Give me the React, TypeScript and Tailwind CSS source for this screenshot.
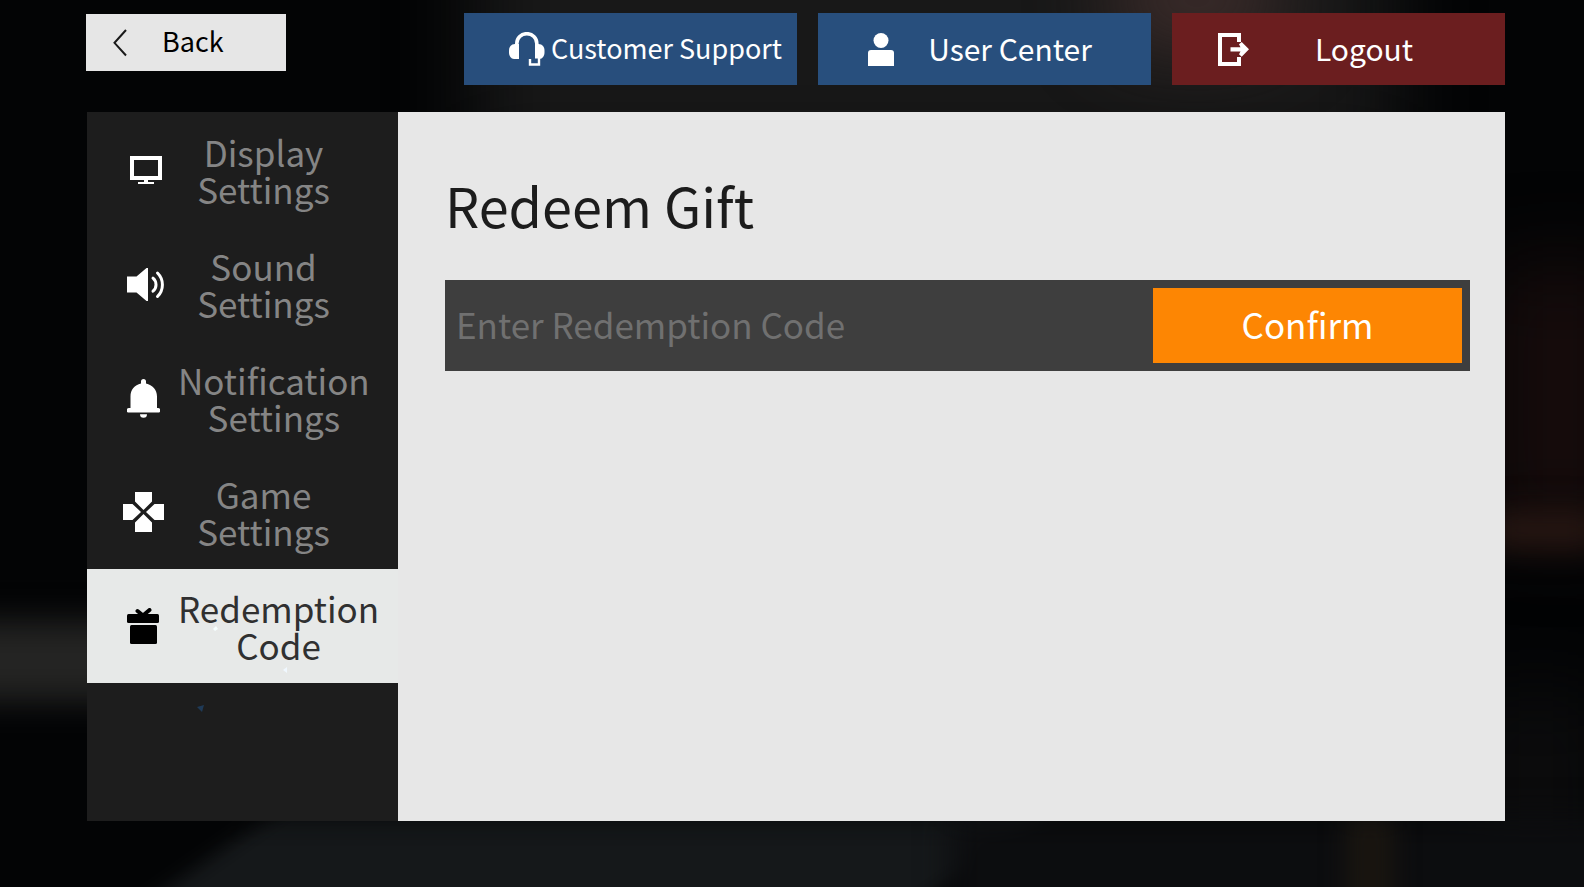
import React, { useState } from 'react';

const BackIcon = () => (
  <svg width="14" height="28" viewBox="0 0 14 28" fill="none" stroke="#1a1a1a" strokeWidth="2">
    <path d="M13 1 1.500 13.800 13 26.500" />
  </svg>
);

const HeadsetIcon = () => (
  <svg width="36" height="34" viewBox="0 0 36 34" fill="#fff">
    <path d="M10 12v15H5C2 27 0 24 0 20.500v-2C0 15 2 12 6 12z" />
    <path d="M26 12h3.500c4 0 6 3 6 6.500v2c0 3.500-2 6.500-5 6.500H29v-.5h-3z" />
    <path d="M7.800 14v-2.500a10 9.800 0 0 1 20 0V14" fill="none" stroke="#fff" strokeWidth="3.600" />
    <path d="M21 27v5.500h9V25" fill="none" stroke="#fff" strokeWidth="2.400" />
  </svg>
);

const UserIcon = () => (
  <svg width="26" height="33" viewBox="0 0 26 33" fill="#fff">
    <circle cx="13" cy="7.500" r="7.500" />
    <path d="M3 17h20a3 3 0 0 1 3 3v13H0V20a3 3 0 0 1 3-3z" />
  </svg>
);

const LogoutIcon = () => (
  <svg width="34" height="33" viewBox="0 0 34 33" fill="#fff">
    <path d="M0 0h23v9h-4V4H4v25h15v-5h4v9H0z" />
    <path d="M12.500 14.300h10l-1.500-3L23.700 9l7.300 7.300-7.300 7.400-2.700-2.400 1.500-2.800h-10z" />
  </svg>
);

const DisplayIcon = () => (
  <svg width="36" height="28" viewBox="-4 0 36 28" fill="#fff">
    <path fillRule="evenodd" d="M0 0h32v24H18v2h6v2H8v-2h6v-2H0zM4 4v16h24V4z" />
  </svg>
);

const SoundIcon = () => (
  <svg width="42" height="33" viewBox="-4 0 42 33" fill="#fff">
    <path d="M0 8.500h9.500L19.500 0H21v33h-1.500l-10-8.500H0z" />
    <path
      d="M26 10.200a8.500 8.500 0 0 1 0 13M30.500 5a16.500 16.500 0 0 1 0 23.500"
      fill="none"
      stroke="#fff"
      strokeWidth="3"
      strokeLinecap="round"
    />
  </svg>
);

const BellIcon = () => (
  <svg width="33" height="39" viewBox="0 0 33 39" fill="#fff">
    <path d="M14 4.500V2.500a2.500 2.500 0 0 1 5 0v2c6.500 1.500 11 6 11 13V29h1a2.300 2.300 0 0 1 0 4.600H2A2.300 2.300 0 0 1 2 29h1.500V17.500c0-7 4-11.500 10.500-13z" />
    <path d="M13 35.200h7a3.500 3.500 0 0 1-7 0z" />
  </svg>
);

const GameIcon = () => (
  <svg width="42" height="40" viewBox="0 0 42 40" fill="#fff">
    <path d="M12 0h17v9.500L20.500 18 12 9.500zM12 40h17v-9.500L20.500 22 12 30.500zM0 12v16h9.500l8.500-8-8.500-8zM41 12v16h-9.500L23 20l8.500-8z" />
  </svg>
);

const GiftIcon = () => (
  <svg width="34" height="36" viewBox="0 0 34 36">
    <path d="M10.500 3 16 7.500 22.500 2" fill="none" stroke="#000" strokeWidth="4" strokeLinecap="round" />
    <rect y="6" width="32" height="9" rx="1.500" />
    <rect x="3" y="17" width="27" height="19" rx="1.500" />
  </svg>
);

interface MenuItem {
  key: string;
  lines: [string, string];
  icon: React.ReactNode;
}

const menu: MenuItem[] = [
  { key: 'display', lines: ['Display', 'Settings'], icon: <DisplayIcon /> },
  { key: 'sound', lines: ['Sound', 'Settings'], icon: <SoundIcon /> },
  { key: 'notification', lines: ['Notification', 'Settings'], icon: <BellIcon /> },
  { key: 'game', lines: ['Game', 'Settings'], icon: <GameIcon /> },
  { key: 'redeem', lines: ['Redemption', 'Code'], icon: <GiftIcon /> },
];

interface ActionButtonProps {
  icon: React.ReactNode;
  label: string;
  color: string;
  textSize: string;
}

const ActionButton: React.FC<ActionButtonProps> = ({ icon, label, color, textSize }) => (
  <button type="button" className={`flex h-[72px] w-[333px] items-center text-white ${color}`}>
    <span className="flex w-[87px] shrink-0 justify-center pl-[38px]">{icon}</span>
    <span className={`min-w-[210px] whitespace-nowrap pb-0.5 text-center ${textSize}`}>{label}</span>
  </button>
);

const Backdrop = () => (
  <div className="absolute inset-0 -z-10 overflow-hidden bg-[#030405]">
    <div className="absolute -top-24 left-[30%] h-64 w-[58%] bg-[#181818] blur-2xl" />
    <div className="absolute -top-10 left-[70%] h-20 w-44 rounded-full bg-[#43302e] blur-2xl" />
    <div className="absolute top-[70%] -left-8 h-20 w-40 bg-[#242423] blur-lg" />
    <div className="absolute top-[30%] -right-10 h-[30%] w-32 bg-[#170c0c] blur-2xl" />
    <div className="absolute top-[58%] -right-4 h-8 w-28 bg-[#2b1914] blur-lg" />
    <div className="absolute top-[78%] -right-4 h-[30%] w-32 bg-[#0c0c0d] blur-2xl" />
    <div className="absolute top-[92%] left-[12%] h-28 w-[49%] -skew-x-[55deg] bg-[#15181a] blur-lg" />
    <div className="absolute top-[92%] left-[60%] h-28 w-[42%] bg-[#0c0d0f] blur-lg" />
    <div className="absolute top-[92%] left-[85%] h-28 w-12 bg-[#191510] blur-md" />
  </div>
);

const Particles = () => (
  <svg
    className="pointer-events-none absolute top-0 left-0"
    width="311"
    height="709"
    viewBox="0 0 311 709"
    aria-hidden="true"
  >
    <path d="M126 517l3-3 2 3-3 2z" fill="#f6ffff" />
    <path d="M196 558l4-3v6z" fill="#f0f8ff" />
    <path d="M110 595l7-2-2 7z" fill="#1f3a57" />
  </svg>
);

export default function App() {
  const [active, setActive] = useState('redeem');
  const [code, setCode] = useState('');

  return (
    <div className="relative isolate flex min-h-screen flex-col pt-[13px] pr-[79px] pb-[66px] pl-[86px] font-['Noto_Sans_CJK_SC','Noto_Sans',sans-serif]">
      <Backdrop />
      <header className="flex items-start justify-between">
        <button
          type="button"
          className="mt-px flex h-[57px] w-[200px] items-center bg-[#e6e6e6] text-black"
        >
          <span className="flex w-[76px] justify-center pr-2">
            <BackIcon />
          </span>
          <span className="pb-0.5 text-[27px]">Back</span>
        </button>
        <div className="flex gap-[21px]">
          <ActionButton icon={<HeadsetIcon />} label="Customer Support" color="bg-[#284e7c]" textSize="text-[27px]" />
          <ActionButton icon={<UserIcon />} label="User Center" color="bg-[#284f7d]" textSize="text-[30px]" />
          <ActionButton icon={<LogoutIcon />} label="Logout" color="bg-[#6b1e1f]" textSize="text-[30px]" />
        </div>
      </header>

      <div className="mt-[27px] ml-px flex flex-1">
        <nav className="relative w-[311px] shrink-0 bg-[#1d1d1d] pt-px">
          {menu.map((item) => (
            <button
              key={item.key}
              type="button"
              onClick={() => setActive(item.key)}
              className={`flex h-[114px] w-full items-center ${
                item.key === active ? 'bg-[#e7e9e8] text-[#303030]' : 'text-[#858585]'
              }`}
            >
              <span className="flex w-[91px] shrink-0 justify-center pl-[22px]">{item.icon}</span>
              <span className="min-w-[171px] text-center text-[35px] leading-[37px]">
                {item.lines[0]}
                <br />
                {item.lines[1]}
              </span>
            </button>
          ))}
          <Particles />
        </nav>

        <main className="flex-1 bg-[#e7e7e7] pt-[53px] pr-[35px] pl-[47px]">
          <h1 className="text-[54px] leading-[80px] text-[#1c1c1c]">Redeem Gift</h1>
          <form
            className="mt-[35px] flex h-[91px] bg-[#3e3e3e] p-2"
            onSubmit={(e) => e.preventDefault()}
          >
            <input
              type="text"
              aria-label="Redemption code"
              placeholder="Enter Redemption Code"
              value={code}
              onChange={(e) => setCode(e.target.value)}
              className="min-w-0 flex-1 bg-transparent pb-0.5 pl-[3px] text-[35px] text-white outline-none placeholder:text-[#707070]"
            />
            <button type="submit" className="w-[309px] bg-[#fd8603] pb-0.5 text-[35px] text-white">
              Confirm
            </button>
          </form>
        </main>
      </div>
    </div>
  );
}
